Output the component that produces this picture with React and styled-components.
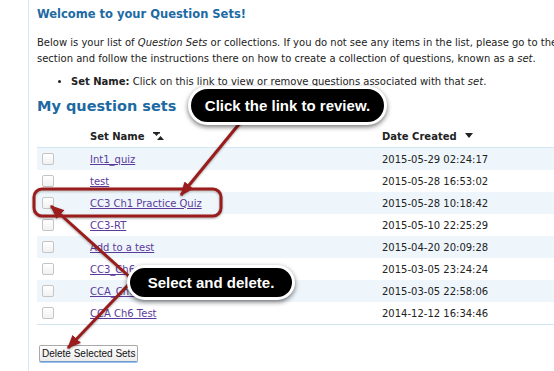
import React from "react";
import styled, { createGlobalStyle } from "styled-components";

const GlobalStyle = createGlobalStyle`
  html, body { margin: 0; padding: 0; background: #fff; overflow: hidden; }
  body { width: 554px; height: 371px; }
`;

const Page = styled.div`
  position: relative;
  width: 554px;
  height: 371px;
  overflow: hidden;
  padding-left: 28px;
  box-sizing: border-box;
`;

const Main = styled.div`
  width: 760px;
  min-height: 371px;
  box-sizing: border-box;
  border-left: 1px solid #d6e7f3;
  padding: 6px 0 0 8px;
  font-family: "DejaVu Sans", sans-serif;
  font-size: 10px;
  color: #222;
`;

const Title = styled.h1`
  margin: 0;
  font-size: 11.5px;
  line-height: 16px;
  font-weight: bold;
  color: #1d6aa3;
`;

const Intro = styled.p`
  margin: 13px 0 0;
  line-height: 16px;
  white-space: pre-line;
`;

const Bullets = styled.ul`
  margin: 7px 0 0;
  padding-left: 34px;
  line-height: 16px;
  list-style: disc;
`;

const Heading = styled.h2`
  margin: 7px 0 0;
  font-size: 14.5px;
  line-height: 18px;
  font-weight: bold;
  color: #1d6aa3;
`;

const Table = styled.div`
  margin-top: 10px;
  width: 620px;
  border-bottom: 1px solid #d3e6f4;
`;

const HeadRow = styled.div`
  display: grid;
  grid-template-columns: 53px 292px 1fr;
  align-items: center;
  height: 22px;
  border-bottom: 1px solid #d3e6f4;
  font-weight: bold;
  color: #222;
`;

const Row = styled.div`
  display: grid;
  grid-template-columns: 53px 292px 1fr;
  align-items: center;
  height: 22px;
  background: ${(p) => (p.$striped ? "#eef6fc" : "#fff")};
`;

const Cell = styled.div`
  display: flex;
  align-items: center;
  gap: 8px;
  padding-left: ${(p) => p.$pad || 0}px;
`;

const Box = styled.span`
  display: block;
  width: 10px;
  height: 10px;
  border: 1px solid #c4c4c4;
  border-radius: 2px;
  background: linear-gradient(#ffffff, #f1f1f1);
`;

const Link = styled.a`
  color: #5a3a9a;
  text-decoration: underline;
  cursor: pointer;
`;

const Button = styled.button`
  margin-top: 20px;
  margin-left: 2px;
  height: 17px;
  padding: 0 2px;
  font-family: "Liberation Sans", Arial, sans-serif;
  font-size: 10px;
  color: #111;
  background: linear-gradient(#ffffff, #ececec);
  border: 1px solid #a9a9a9;
  border-bottom-color: #6f9ad0;
  border-radius: 2px;
  box-shadow: 0 1px 0 #9cc0ea;
`;

const Overlay = styled.svg`
  position: absolute;
  left: 0;
  top: 0;
  pointer-events: none;
  filter: drop-shadow(0 1px 1px rgba(0, 0, 0, 0.35));
`;

const Callout = styled.div`
  position: absolute;
  left: ${(p) => p.$x}px;
  top: ${(p) => p.$y}px;
  width: ${(p) => p.$w}px;
  height: ${(p) => p.$h}px;
  box-sizing: border-box;
  display: flex;
  align-items: center;
  justify-content: center;
  background: #000;
  border: 3px solid #fff;
  border-radius: 20px;
  box-shadow: 0 2px 5px rgba(0, 0, 0, 0.55);
  color: #fff;
  font-family: "Liberation Sans", Arial, sans-serif;
  font-weight: bold;
  font-size: 15px;
  white-space: nowrap;
`;

const SortBoth = () => (
  <svg width="11" height="8" viewBox="0 0 11 8">
    <polygon points="0,0 7,0 3.5,4" fill="#222" />
    <polygon points="4,8 11,8 7.5,4" fill="#222" />
    <rect x="0" y="0" width="7" height="1.5" fill="#222" />
  </svg>
);

const SortDown = () => (
  <svg width="8" height="6" viewBox="0 0 8 6">
    <polygon points="0,0 8,0 4,5" fill="#222" />
  </svg>
);

const sets = [
  ["Int1_quiz", "2015-05-29 02:24:17"],
  ["test", "2015-05-28 16:53:02"],
  ["CC3 Ch1 Practice Quiz", "2015-05-28 10:18:42"],
  ["CC3-RT", "2015-05-10 22:25:29"],
  ["Add to a test", "2015-04-20 20:09:28"],
  ["CC3_Ch6", "2015-03-05 23:24:24"],
  ["CCA_Ch6", "2015-03-05 22:58:06"],
  ["CCA Ch6 Test", "2014-12-12 16:34:46"],
];

const RED = "#9a1c1c";

export default function App() {
  return (
    <>
      <GlobalStyle />
      <Page>
        <Main>
          <Title>Welcome to your Question Sets!</Title>
          <Intro>
            Below is your list of <em>Question Sets</em> or collections. If you do not see any items in the list, please go to the{"\n"}
            section and follow the instructions there on how to create a collection of questions, known as a <em>set</em>.
          </Intro>
          <Bullets>
            <li>
              <strong>Set Name:</strong> Click on this link to view or remove questions associated with that <em>set</em>.
            </li>
          </Bullets>
          <Heading>My question sets</Heading>
          <Table>
            <HeadRow>
              <Cell />
              <Cell>
                Set Name <SortBoth />
              </Cell>
              <Cell>
                Date Created <SortDown />
              </Cell>
            </HeadRow>
            {sets.map(([name, date], i) => (
              <Row key={name} $striped={i % 2 === 0}>
                <Cell $pad={5}>
                  <Box />
                </Cell>
                <Cell>
                  <Link>{name}</Link>
                </Cell>
                <Cell>{date}</Cell>
              </Row>
            ))}
          </Table>
          <Button>Delete Selected Sets</Button>
        </Main>

        <Overlay width="554" height="371" viewBox="0 0 554 371">
          <defs>
            <marker id="head" viewBox="0 0 12 10" refX="11" refY="5" markerWidth="4.6" markerHeight="3.9" orient="auto" markerUnits="strokeWidth">
              <polygon points="0,0 12,5 0,10" fill={RED} />
            </marker>
          </defs>
          <rect x="34" y="189" width="187" height="27" rx="8" fill="none" stroke={RED} strokeWidth="3" />
          <line x1="244" y1="118" x2="181" y2="195" stroke={RED} strokeWidth="3" markerEnd="url(#head)" />
          <line x1="132" y1="279" x2="51" y2="206" stroke={RED} strokeWidth="3" markerEnd="url(#head)" />
          <line x1="130" y1="283" x2="68" y2="348" stroke={RED} strokeWidth="3" markerEnd="url(#head)" />
        </Overlay>

        <Callout $x={188} $y={86} $w={199} $h={39}>Click the link to review.</Callout>
        <Callout $x={127} $y={265} $w={168} $h={35}>Select and delete.</Callout>
      </Page>
    </>
  );
}
